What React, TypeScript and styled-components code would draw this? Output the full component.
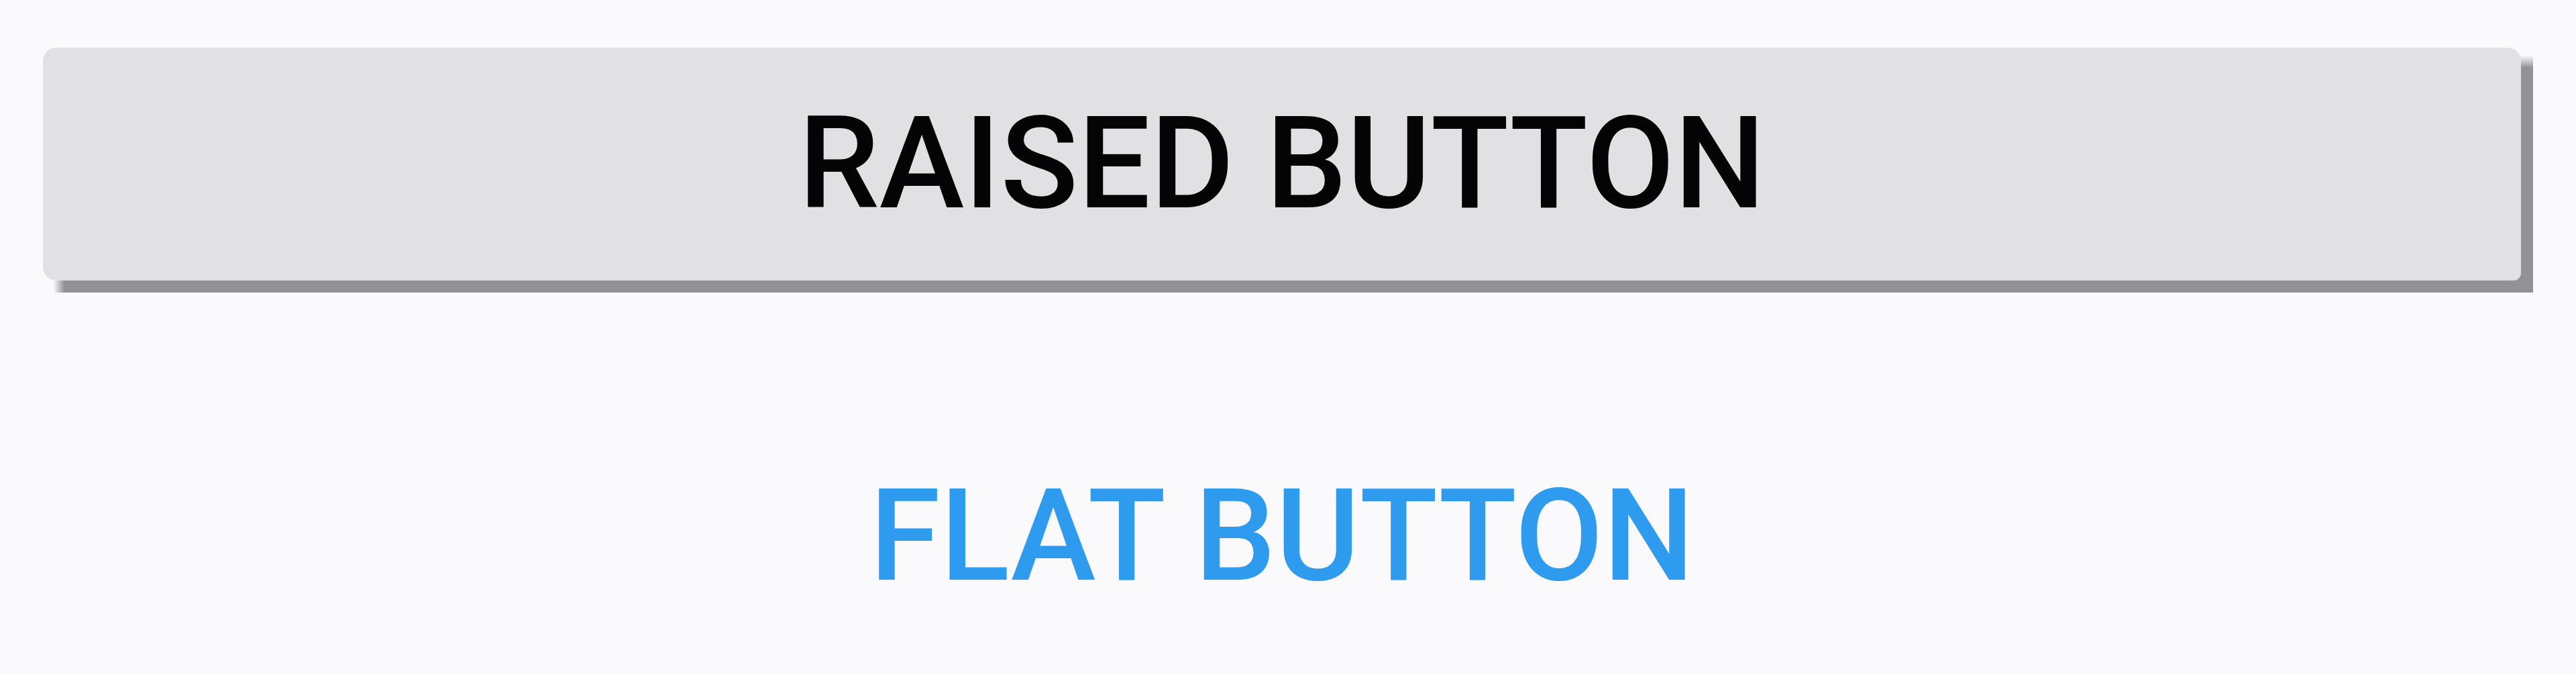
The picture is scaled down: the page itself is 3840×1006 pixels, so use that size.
import React from "react";
import styled, { createGlobalStyle } from "styled-components";

const GlobalStyle = createGlobalStyle`
  html, body {
    margin: 0;
    padding: 0;
    background: #faf9fc;
  }
  body {
    font-family: Roboto, "Noto Sans", Arial, sans-serif;
  }
`;

const Page = styled.div`
  display: flex;
  flex-direction: column;
  gap: 208px;
  padding: 71px 82px 0 64px;
  min-height: 1006px;
  box-sizing: border-box;
  background: #faf9fc;
`;

const ButtonBase = styled.button`
  display: flex;
  align-items: center;
  justify-content: center;
  height: 347px;
  width: 100%;
  border: none;
  padding: 0;
  margin: 0;
  font-family: Roboto, "Noto Sans", Arial, sans-serif;
  font-weight: 500;
  font-size: 191px;
  line-height: 1;
  text-transform: uppercase;
  cursor: pointer;
`;

const ShadowLayer = styled.div`
  position: relative;
  z-index: 0;
`;

const RaisedButton = styled(ButtonBase)`
  position: relative;
  background: #e1e0e3;
  color: #040305;
  border-radius: 20px 20px 11px 20px;

  /* hard drop shadow offset down and right, fading in at its top and left ends */
  &::before {
    content: "";
    position: absolute;
    left: 16px;
    top: 12px;
    right: -18px;
    bottom: -18px;
    background: #929195;
    z-index: -1;
    -webkit-mask-image: linear-gradient(to right, transparent 0, #000 16px),
      linear-gradient(to bottom, transparent 0, #000 18px);
    -webkit-mask-composite: source-in;
    mask-image: linear-gradient(to right, transparent 0, #000 16px),
      linear-gradient(to bottom, transparent 0, #000 18px);
    mask-composite: intersect;
  }
`;

const FlatButton = styled(ButtonBase)`
  background: transparent;
  color: #2e9bef;
`;

export default function App() {
  return (
    <>
      <GlobalStyle />
      <Page>
        <ShadowLayer>
          <RaisedButton>Raised Button</RaisedButton>
        </ShadowLayer>
        <FlatButton>Flat Button</FlatButton>
      </Page>
    </>
  );
}
